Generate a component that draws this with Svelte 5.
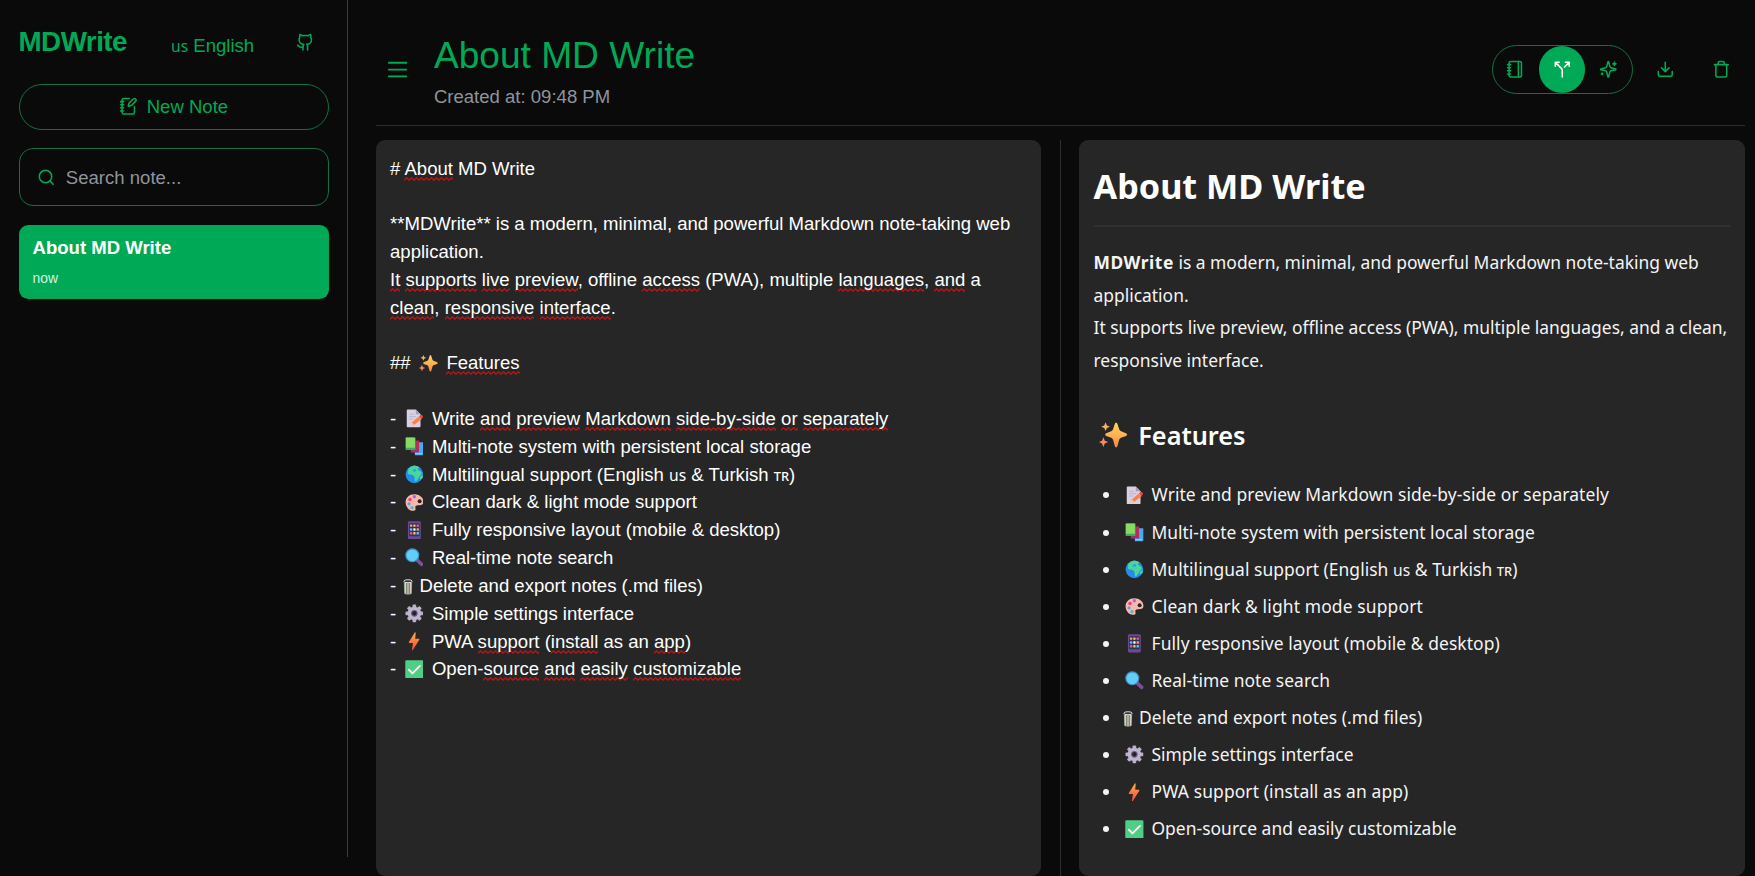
<script>
  const features = [
    { icon: 'memo', track: 0.08, src: 'Write ~and~ ~preview~ ~Markdown~ ~side-by-side~ ~or~ ~separately~' },
    { icon: 'books', track: 0.01, src: 'Multi-note system with persistent local storage' },
    { icon: 'globe', track: 0.05, src: 'Multilingual support (English ^us^ & Turkish ^TR^)' },
    { icon: 'palette', track: 0.14, src: 'Clean dark & light mode support' },
    { icon: 'phone', track: 0.08, src: 'Fully responsive layout (mobile & desktop)' },
    { icon: 'magnifier', track: 0.03, src: 'Real-time note search' },
    { icon: 'bin', track: 0.05, src: 'Delete and export notes (.md files)' },
    { icon: 'gear', track: 0, src: 'Simple settings interface' },
    { icon: 'bolt', track: 0.11, src: 'PWA ~support~ (~install~ as an ~app~)' },
    { icon: 'check', track: 0.03, src: 'Open-~source~ ~and~ ~easily~ ~customizable~' }
  ];

  const lines = [
    { src: '# ~About~ MD Write' },
    { src: '' },
    { src: '**MDWrite** is a modern, minimal, and powerful Markdown note-taking web' },
    { src: 'application.' },
    { src: '~It~ ~supports~ ~live~ ~preview~, offline ~access~ (PWA), multiple ~languages~, ~and~ a' },
    { src: '~clean~, ~responsive~ ~interface~.' },
    { src: '' },
    { lead: '## ', icon: 'sparkles', src: '~Features~' },
    { src: '' },
    ...features.map((f) => ({ lead: '- ', ...f }))
  ];

  // ~word~ is flagged by the spell checker, ^XX^ is a regional-indicator pair
  function parts(src) {
    return src
      .split(/(~[^~]+~|\^[^^]+\^)/)
      .filter(Boolean)
      .map((t) => {
        if (t[0] === '~') return { kind: 'typo', text: t.slice(1, -1) };
        if (t === '^TR^') return { kind: 'flag caps', text: 'TR' };
        if (t[0] === '^') return { kind: 'flag', text: t.slice(1, -1) };
        return { kind: 'text', text: t };
      });
  }

  const teeth = [0, 45, 90, 135, 180, 225, 270, 315];
  const dots = [0, 1, 2, 3, 4, 5, 6, 7, 8];
  const dotColors = ['#f9a35b', '#f3c65f', '#ef5d7b', '#5cc8f5', '#fff', '#f9a35b', '#ef5d7b', '#f3c65f', '#5cc8f5'];
</script>

{#snippet emoji(name)}
  <span class="emoji" class:narrow={name === 'bin'}>
    {#if name === 'bin'}
      <svg viewBox="0 0 10 16">
        <path d="M.8 2.3h8.4L8.8 14c0 1-1.700 1.600-3.800 1.600S1.200 15 1.200 14z" fill="#a3a89c" />
        <path d="M2.500 4v10.500M5 4.300v10.800M7.500 4v10.500" stroke="#e4d3c2" stroke-width=".9" />
        <path d="M3.700 4v10.900M6.300 4.200v10.700" stroke="#55705f" stroke-width=".7" />
        <ellipse cx="5" cy="2.200" rx="4.200" ry="1.500" fill="#333" stroke="#e8e8e8" stroke-width=".9" />
      </svg>
    {:else}
      <svg viewBox="0 0 32 32">
        {#if name === 'sparkles'}
          <defs>
            <linearGradient id="spark" x1="0" y1="0" x2="0" y2="1">
              <stop offset="0" stop-color="#ffd75e" /><stop offset="1" stop-color="#f68a4c" />
            </linearGradient>
          </defs>
          <path fill="url(#spark)" d="M19.500 2c1 0 1.300.8 1.600 1.700l1.700 5.200c.5 1.600 1.400 2.500 3 3.100l4.300 1.600c1.200.5 1.900 1 1.900 1.900s-.7 1.400-1.900 1.800l-4.300 1.600c-1.600.6-2.500 1.500-3 3.100l-1.700 6.200c-.3 1-.6 1.800-1.600 1.800s-1.300-.8-1.600-1.800L16.200 22c-.5-1.600-1.400-2.500-3-3.100l-4.300-1.600C7.700 16.900 7 16.400 7 15.500s.7-1.400 1.900-1.900l4.300-1.600c1.600-.6 2.500-1.500 3-3.100l1.700-5.200c.3-.9.600-1.700 1.600-1.700z" />
          <path fill="#fbb35a" d="M7.500 1.500 9 5l3.500 1.500L9 8 7.500 11.500 6 8 2.500 6.500 6 5z" />
          <path fill="#f58a62" d="M5 18.500l1.600 3.900L10.500 24l-3.900 1.600L5 29.500l-1.600-3.900L0 24l3.400-1.600z" />
        {:else if name === 'memo'}
          <path d="M4.500 1h14l8 8v20.500c0 .9-.6 1.500-1.500 1.500H4.500C3.600 31 3 30.400 3 29.500v-27C3 1.600 3.600 1 4.500 1z" fill="#d9d0e4" />
          <path d="M18.500 1l8 8h-6.500c-.9 0-1.500-.6-1.500-1.500z" fill="#a99bb8" />
          <path d="M7 9h8M7 13h12M7 17h7" stroke="#b9aec7" stroke-width="1.400" />
          <path d="M10 29l2-6.500L24 12.500l4.800 4.700L15.500 27.500z" fill="#f9824b" />
          <path d="M24 12.500l2.300-1.800c1.200-.9 2.500-.8 3.500.200 1.200 1.100 1.300 2.700.2 3.800l-1.200 2.500z" fill="#e2474f" />
          <path d="M10 29l2-6.500 3.500 5z" fill="#fcd0a5" />
        {:else if name === 'books'}
          <path d="M16 9h14.500c.5 0 .8.400.8.900v20c0 .6-.4 1.100-1 1.100H17z" fill="#4aa9ea" />
          <path d="M17 28.500h12" stroke="#8fd0fb" stroke-width="2" />
          <path d="M10 6h14v19.500c0 .6-.4 1-1 1H10z" fill="#b82d5d" />
          <path d="M11 23.500h11" stroke="#7d3b87" stroke-width="2.400" />
          <rect x="1" y="1" width="17" height="21" rx="1" fill="#47a657" />
          <rect x="1.500" y="1" width="15.500" height="17.500" rx="1" fill="#86dc62" />
        {:else if name === 'globe'}
          <circle cx="16" cy="16" r="15" fill="#238de8" />
          <path d="M8 4.500C11 2 15 1 19 1.500c3 .5 5 1.500 7 3.500-3-.5-4 1-3.500 3 .5 1.500 3.500 1.500 5.500 4 1.500 2 0 5-2 6s-3 6-6 9-3.500-1-3.500-4-1-4-3-5.500-6 0-8-2.500 1-4 0-6 1-3.500 2.500-4.500z" fill="#48d6a0" />
          <path d="M14 8c2-2 5-1 5 1s-2 3-4 2.500S12.500 9.500 14 8z" fill="#29a5d8" />
          <path d="M26 20c2-2 4-3 4.500-1.500S29 24 27 24.500 24.500 21.500 26 20z" fill="#48d6a0" />
        {:else if name === 'palette'}
          <path d="M16 2C7.500 2 1 8 1 15.500 1 23 6 30.500 13.500 30.500c4.500 0 5-2.500 4.300-5-.7-2.800.7-4.500 4.200-4.500 6 0 9.500-1 9.500-6C31.500 7.500 24.500 2 16 2z" fill="#f7b9aa" />
          <circle cx="25" cy="14" r="3.400" fill="#252525" />
          <circle cx="16" cy="6.500" r="2.900" fill="#b164dc" />
          <circle cx="8.500" cy="11" r="3" fill="#e8408a" />
          <circle cx="7" cy="18.500" r="2.700" fill="#5f9fe4" />
          <circle cx="12" cy="25" r="2.900" fill="#59b6c9" />
        {:else if name === 'phone'}
          <rect x="5" y="0.500" width="22" height="31" rx="2.500" fill="#6a4b93" />
          <rect x="7" y="4" width="18" height="22" rx="1" fill="#33335a" />
          {#each dots as d}
            <rect x={8.400 + (d % 3) * 5.700} y={6 + Math.floor(d / 3) * 6.500} width="4" height="4" rx="1" fill={dotColors[d]} />
          {/each}
        {:else if name === 'magnifier'}
          <path d="M19 19l9.500 9" stroke="#7a5196" stroke-width="6" stroke-linecap="round" />
          <circle cx="12.500" cy="12.500" r="11" fill="#62cdf6" stroke="#3f93cc" stroke-width="2" />
        {:else if name === 'gear'}
          {#each teeth as a}
            <rect x="12.800" y="0.800" width="6.400" height="8" rx="1.600" fill="#b9aeca" transform="rotate({a} 16 16)" />
          {/each}
          <circle cx="16" cy="16" r="8" fill="none" stroke="#bfb5cf" stroke-width="7" />
          <circle cx="16" cy="16" r="4.800" fill="#252525" stroke="#75678c" stroke-width="1.800" />
        {:else if name === 'bolt'}
          <defs>
            <linearGradient id="bolt" x1="0" y1="0" x2="0" y2="1">
              <stop offset="0" stop-color="#ffb04a" /><stop offset="1" stop-color="#f0473f" />
            </linearGradient>
          </defs>
          <path d="M16.500 1.200c.3-.8 1.700-.9 1.700.3l-.7 10h6c1 0 1.500 1 .9 1.900L13.500 30.700c-.6.9-1.800.4-1.600-.7l1.700-11.200H7.700c-1.200 0-1.500-.8-1.100-1.800z" fill="url(#bolt)" />
        {:else if name === 'check'}
          <rect x="0.500" y="0.500" width="31" height="31" rx="2" fill="#4fcf85" />
          <path d="M6.500 16.500l6.300 6.300L25.500 10" fill="none" stroke="#fff" stroke-width="3" stroke-linecap="round" stroke-linejoin="round" />
        {/if}
      </svg>
    {/if}
  </span>
{/snippet}

<div class="app">
  <aside class="sidebar">
    <div class="brand-row">
      <h1 class="brand">MDWrite</h1>
      <span class="lang"><span class="flag">us</span> English</span>
      <svg class="icon github" viewBox="0 0 24 24">
        <path d="M15 22v-4a4.800 4.800 0 0 0-1-3.500c3 0 6-2 6-5.500.08-1.250-.27-2.480-1-3.500.28-1.150.28-2.350 0-3.500 0 0-1 0-3 1.500-2.640-.5-5.360-.5-8 0C6 2 5 2 5 2c-.3 1.150-.3 2.350 0 3.500A5.403 5.403 0 0 0 4 9c0 3.500 3 5.500 6 5.500-.39.490-.68 1.050-.85 1.650-.17.600-.22 1.230-.15 1.850v4" />
        <path d="M9 18c-4.510 2-5-2-7-2" />
      </svg>
    </div>

    <button class="new-note">
      <svg class="icon" viewBox="0 0 24 24">
        <path d="M13.400 2H6a2 2 0 0 0-2 2v16a2 2 0 0 0 2 2h12a2 2 0 0 0 2-2v-7.400M2 6h4M2 10h4M2 14h4M2 18h4" />
        <path d="M21.378 5.626a1 1 0 1 0-3.004-3.004l-5.010 5.012a2 2 0 0 0-.506.854l-.837 2.870a.5.5 0 0 0 .62.62l2.870-.837a2 2 0 0 0 .854-.506z" />
      </svg>
      <span>New Note</span>
    </button>

    <div class="search">
      <svg class="icon" viewBox="0 0 24 24"><circle cx="11" cy="11" r="8" /><path d="m21 21-4.340-4.340" /></svg>
      <span>Search note...</span>
    </div>

    <div class="note">
      <strong>About MD Write</strong>
      <small>now</small>
    </div>
  </aside>

  <main class="main">
    <header class="header">
      <div class="heading">
        <button class="round toggle">
          <svg class="icon menu" viewBox="0 0 24 24"><path d="M3 5h18M3 12h18M3 19h18" /></svg>
        </button>
        <div class="titles">
          <div class="title">About MD Write</div>
          <div class="created">Created at: 09:48 PM</div>
        </div>
      </div>
      <div class="tools">
        <div class="modes">
          <button class="round">
            <svg class="icon" viewBox="0 0 24 24"><path d="M2 6h4M2 10h4M2 14h4M2 18h4M16 2v20" /><rect x="4" y="2" width="16" height="20" rx="2" /></svg>
          </button>
          <button class="round active">
            <svg class="icon" viewBox="0 0 24 24"><path d="M16 3h5v5M8 3H3v5M12 22v-8.300a4 4 0 0 0-1.172-2.872L3 3M15 9l6-6" /></svg>
          </button>
          <button class="round">
            <svg class="icon" viewBox="0 0 24 24">
              <path d="M9.937 15.500A2 2 0 0 0 8.500 14.063l-6.135-1.582a.5.5 0 0 1 0-.962L8.500 9.936A2 2 0 0 0 9.937 8.500l1.582-6.135a.5.5 0 0 1 .963 0L14.063 8.500A2 2 0 0 0 15.500 9.937l6.135 1.581a.5.5 0 0 1 0 .964L15.500 14.063a2 2 0 0 0-1.437 1.437l-1.582 6.135a.5.5 0 0 1-.963 0z" />
              <path d="M20 3v4M22 5h-4M4 17v2M5 18H3" />
            </svg>
          </button>
        </div>
        <button class="round">
          <svg class="icon" viewBox="0 0 24 24"><path d="M12 15V3M21 15v4a2 2 0 0 1-2 2H5a2 2 0 0 1-2-2v-4M7 10l5 5 5-5" /></svg>
        </button>
        <button class="round">
          <svg class="icon" viewBox="0 0 24 24"><path d="M3 6h18M19 6v14a2 2 0 0 1-2 2H7a2 2 0 0 1-2-2V6M8 6V4a2 2 0 0 1 2-2h4a2 2 0 0 1 2 2v2" /></svg>
        </button>
      </div>
    </header>

    <div class="panes">
      <section class="pane editor">
        {#each lines as line}
          <div class="line">{#if line.icon}{line.lead}{@render emoji(line.icon)}{' '}{/if}{#each parts(line.src) as p}<span class={p.kind}>{p.text}</span>{/each}</div>
        {/each}
      </section>

      <div class="divider"></div>

      <section class="pane preview">
        <h1>About MD Write</h1>
        <p>
          <strong>MDWrite</strong> is a modern, minimal, and powerful Markdown note-taking web<br />application.<br />
          It supports live preview, offline access (PWA), multiple languages, and a clean,<br />responsive interface.
        </p>
        <h2>{@render emoji('sparkles')} Features</h2>
        <ul>
          {#each features as f}
            <li style="letter-spacing: {f.track}px">{@render emoji(f.icon)}{' '}{#each parts(f.src) as p}<span class={p.kind === 'typo' ? 'text' : p.kind}>{p.text}</span>{/each}</li>
          {/each}
        </ul>
      </section>
    </div>
  </main>
</div>

<style>
  :global(body) {
    background: #0a0a0a;
    overflow: hidden;
  }

  .app {
    display: flex;
    width: 1755px;
    height: 876px;
    overflow: hidden;
    background: #0a0a0a;
    color: #00a955;
    font-family: 'Liberation Sans', Arial, sans-serif;
    font-size: 18.56px;
    line-height: 27.84px;
  }

  .app * {
    box-sizing: border-box;
  }

  button {
    font: inherit;
    color: inherit;
    background: none;
    border: 0;
    padding: 0;
  }

  .icon {
    display: block;
    flex: none;
    width: 18.56px;
    height: 18.56px;
    fill: none;
    stroke: currentColor;
    stroke-width: 2;
    stroke-linecap: round;
    stroke-linejoin: round;
  }

  .sidebar {
    display: flex;
    flex-direction: column;
    flex: none;
    width: 348px;
    height: 857px;
    padding: 18.500px 18.500px 0 18.500px;
    border-right: 1px solid #3c3c3c;
  }

  .brand-row {
    display: flex;
    align-items: flex-start;
    height: 65px;
  }

  .brand {
    width: 152.500px;
    margin: 4px 0 0;
    font-size: 27.84px;
    line-height: 37px;
    font-weight: 700;
    letter-spacing: -0.020em;
  }

  .lang {
    width: 125px;
    margin-top: 13.300px;
    white-space: nowrap;
  }

  .flag {
    font-family: 'Noto Sans', sans-serif;
    font-size: 15.600px;
    line-height: 1;
  }

  .flag.caps {
    font-size: 12.800px;
    font-weight: 500;
  }

  .github {
    margin-top: 14px;
  }

  .new-note {
    display: flex;
    flex: none;
    align-items: center;
    justify-content: center;
    gap: 9.280px;
    height: 46px;
    border: 1px solid #14713f;
    border-radius: 23px;
  }

  .search {
    display: flex;
    flex: none;
    align-items: center;
    gap: 10.300px;
    height: 58px;
    margin-top: 18.500px;
    padding-left: 17.500px;
    border: 1px solid #14713f;
    border-radius: 14px;
  }

  .search span {
    margin-top: 1px;
    color: #8f949d;
  }

  .note {
    display: flex;
    flex: none;
    flex-direction: column;
    height: 74px;
    margin-top: 18.600px;
    padding: 9.200px 14px;
    border-radius: 9.280px;
    background: #00a955;
    color: #fff;
  }

  .note small {
    margin-top: 5px;
    font-size: 13.920px;
    line-height: 22px;
    color: #d5f2e2;
  }

  .main {
    flex: 1;
    display: flex;
    flex-direction: column;
    padding: 0 10px 0 28px;
  }

  .header {
    display: flex;
    flex: none;
    align-items: center;
    justify-content: space-between;
    height: 126px;
    padding-top: 14px;
    border-bottom: 1px solid #2d2d2d;
  }

  .heading {
    display: flex;
    align-items: center;
  }

  .round {
    display: flex;
    align-items: center;
    justify-content: center;
    width: 46.400px;
    height: 46.400px;
    border-radius: 50%;
  }

  .toggle {
    width: 43.400px;
  }

  .menu {
    width: 23.200px;
    height: 23.200px;
  }

  .titles {
    margin-left: 14.500px;
    padding-top: 4px;
  }

  .title {
    font-size: 37.120px;
    line-height: 46px;
  }

  .created {
    line-height: 28px;
    margin-top: 4.500px;
    color: #8f949d;
  }

  .tools {
    display: flex;
    align-items: center;
    gap: 9.280px;
    padding-right: 1px;
  }

  .modes {
    display: flex;
    border: 1px solid #14713f;
    border-radius: 25px;
  }

  .active {
    background: #00a955;
    color: #fff;
  }

  .panes {
    flex: none;
    display: flex;
    height: 736px;
    margin-top: 14px;
  }

  .pane {
    border-radius: 9.280px;
    background: #262626;
    color: #fff;
  }

  .editor {
    width: 665px;
    padding: 14.500px 14px 0;
  }

  .line {
    height: 27.840px;
    white-space: pre;
  }

  .typo {
    padding-bottom: 2px;
    background: url("data:image/svg+xml,%3Csvg xmlns='http://www.w3.org/2000/svg' width='5' height='4'%3E%3Cpath d='M-1.250 2L0 3.200L2.500 .8L5 3.200L6.250 2' fill='none' stroke='%23c01414' stroke-width='1.200'/%3E%3C/svg%3E") repeat-x left bottom;
  }

  .emoji {
    display: inline-flex;
    justify-content: center;
    width: 1.370em;
    height: 1em;
    vertical-align: -0.160em;
  }

  .emoji svg {
    width: 1.010em;
    height: 1.010em;
  }

  .emoji.narrow {
    width: 13px;
  }

  .emoji.narrow svg {
    width: 10px;
    height: 16px;
  }

  .divider {
    width: 1px;
    margin: 0 18.500px;
    background: #2f2f2f;
  }

  .preview {
    width: 666px;
    padding: 14px 14px 0 14.500px;
    font-family: 'Noto Sans', 'Open Sans', sans-serif;
    font-size: 17.430px;
    line-height: 32.480px;
    white-space: nowrap;
  }

  .preview h1 {
    height: 73px;
    margin: 0;
    padding-top: 7.500px;
    border-bottom: 2px solid #303030;
    font-size: 34.200px;
    line-height: 48px;
    font-weight: 700;
  }

  .preview p {
    margin: 19.200px 0 0;
    color: #f4f4f4;
  }

  .preview strong {
    letter-spacing: 0.530px;
  }

  .preview h2 {
    margin: 38.500px 0 0;
    font-size: 25.300px;
    line-height: 40px;
    font-weight: 600;
  }

  .preview h2 .emoji {
    font-size: 27.840px;
  }

  .preview ul {
    margin: 23.800px 0 0;
    padding: 0 0 0 28px;
  }

  .preview li {
    height: 37.120px;
    color: #f4f4f4;
  }

  .preview li .emoji {
    font-size: 18.560px;
  }
</style>
